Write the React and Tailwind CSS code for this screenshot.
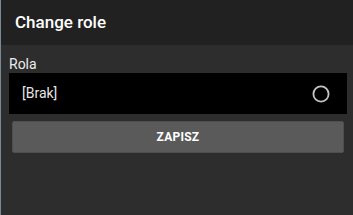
export default function App() {
  return (
    <div
      className="w-[353px] h-[215px] flex bg-[#2d2d2d] overflow-hidden"
      style={{ fontFamily: 'Roboto, "Noto Sans", sans-serif' }}
    >
      <div className="w-[1px] shrink-0 bg-[#7a8b96]" />
      <div className="flex-1 flex flex-col">
        {/* Header */}
        <div className="h-[45px] shrink-0 bg-[#212121] flex items-center pl-[14px]">
          <h2 className="text-[17px] font-medium text-white leading-none m-0">Change role</h2>
        </div>

        {/* Body */}
        <div className="flex flex-col pl-[8px] pr-[6px]">
          <span className="text-[14px] text-[#ececec] leading-none mt-[12px] mb-[2px]">Rola</span>
          <div className="h-[41px] bg-black flex items-center justify-between pl-[13px] pr-[17px]">
            <span className="text-[14px] text-[#e6e6e6]">[Brak]</span>
            <svg width="18" height="18" viewBox="0 0 18 18">
              <circle cx="9" cy="9" r="7.6" fill="none" stroke="#c4c4c4" strokeWidth="1.8" />
            </svg>
          </div>
          <div className="px-[3px] mt-[7px]">
            <button className="w-full h-[32px] bg-[#5a5a5a] border border-[#4e4e4e] rounded-[2px] text-white text-[12px] font-bold tracking-[0.02em]">
              ZAPISZ
            </button>
          </div>
        </div>
      </div>
    </div>
  );
}
